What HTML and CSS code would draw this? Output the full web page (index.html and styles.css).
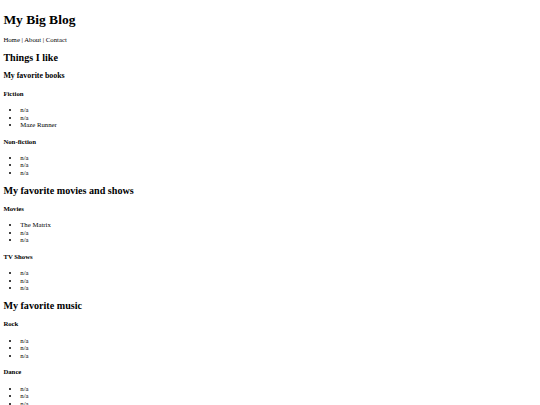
FILE: index.html
```html
<!DOCTYPE html>
<html>
<head>
<meta charset="utf-8">
<title>My Big Blog</title>
<link rel="stylesheet" href="styles.css">
</head>
<body>
<h1>My Big Blog</h1>
<p class="nav">Home | About | Contact</p>
<h2>Things I like</h2>
<h3>My favorite books</h3>
<h4>Fiction</h4>
<ul>
<li>n/a</li>
<li>n/a</li>
<li>Maze Runner</li>
</ul>
<h4>Non-fiction</h4>
<ul>
<li>n/a</li>
<li>n/a</li>
<li>n/a</li>
</ul>
<h2>My favorite movies and shows</h2>
<h4>Movies</h4>
<ul>
<li>The Matrix</li>
<li>n/a</li>
<li>n/a</li>
</ul>
<h4>TV Shows</h4>
<ul>
<li>n/a</li>
<li>n/a</li>
<li>n/a</li>
</ul>
<h2>My favorite music</h2>
<h4>Rock</h4>
<ul>
<li>n/a</li>
<li>n/a</li>
<li>n/a</li>
</ul>
<h4>Dance</h4>
<ul>
<li>n/a</li>
<li>n/a</li>
<li>n/a</li>
</ul>
</body>
</html>
```
FILE: styles.css
```css
body {
  margin: 3.375px;
  font-family: "Liberation Serif", serif;
  font-size: 6.75px;
  line-height: 1.11;
  color: #000;
  background: #fff;
}
h1, h2, h3, h4, p, ul, li {
  color: #000;
}
ul {
  padding-left: 16.875px;
}
```
